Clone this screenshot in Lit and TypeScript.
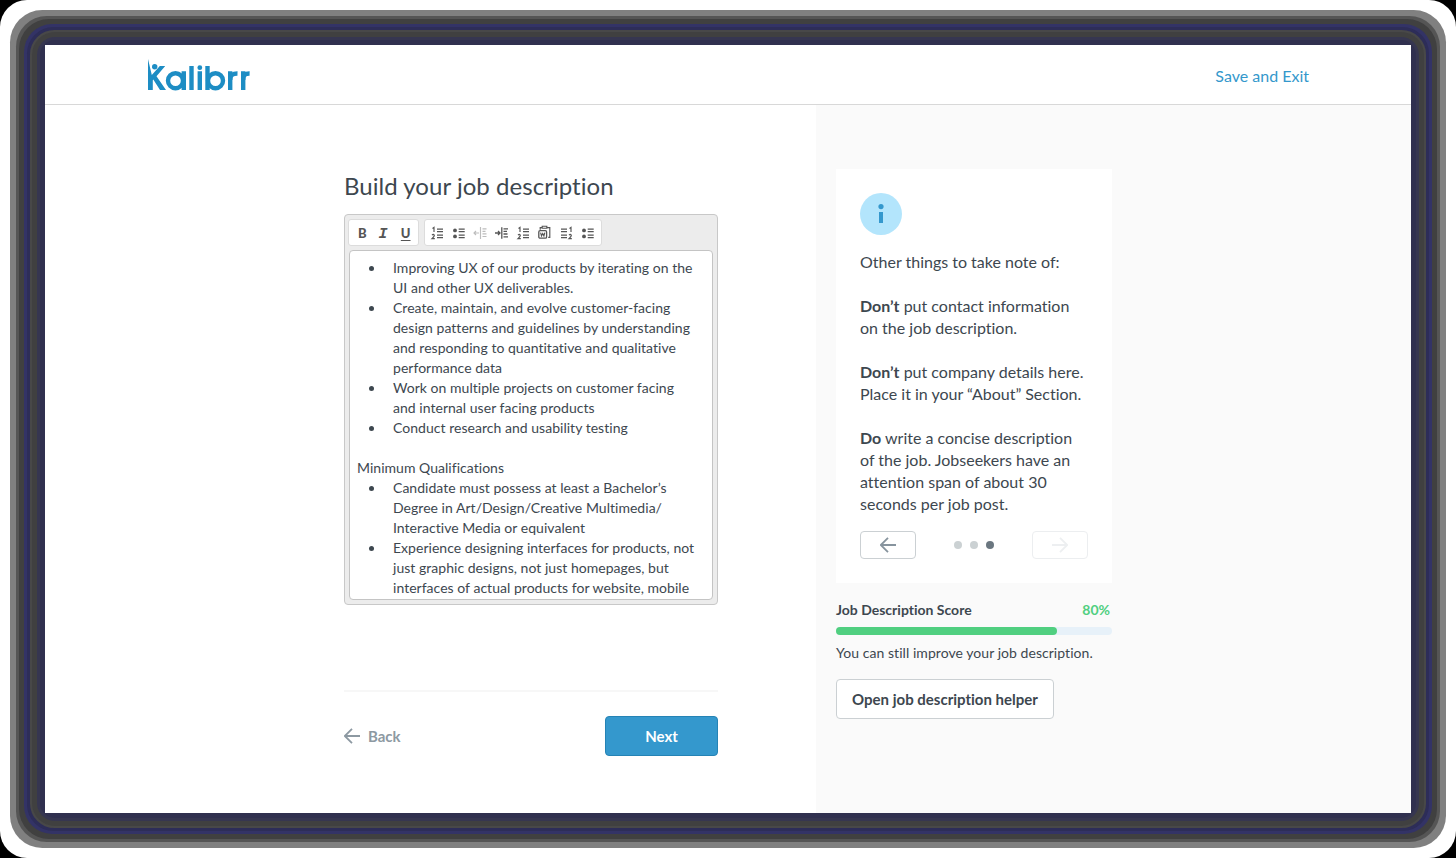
import { LitElement, html, css, svg } from "lit";
import { customElement, property } from "lit/decorators.js";

const one = (x: number, y: number) => svg`<path d="M${x} ${y + 1}L${x + 1.5} ${y}V${y + 4.5}" />`;
const two = (x: number, y: number) => svg`<path d="M${x - 0.5} ${y + 1}q1.4-1.6 2.3 0q.3 1-2.3 3.4h2.8" />`;
const rows = (x: number, w: number) => svg`<path stroke-width="1.2" d="M${x} 4.2h${w}M${x} 6.7h${w}M${x} 10.2h${w}M${x} 12.7h${w}" />`;

const icons: Record<string, unknown> = {
  ordered: svg`${one(2.5, 2.4)}${two(2.5, 9.2)}${rows(7, 6)}`,
  bullets: svg`<circle cx="4" cy="5.4" r="1.9" fill="currentColor" stroke="none" /><circle cx="4" cy="11.4" r="1.9" fill="currentColor" stroke="none" />${rows(7.7, 6)}`,
  outdent: svg`<path d="M1 8h5M3 6L1 8l2 2M7.5 2v12" /><path d="M9.5 3.8h4M9.5 6.3h3M9.5 8.8h4M9.5 11.5h4" />`,
  indent: svg`<path stroke-width="1.3" d="M1 8h5M4 6l2 2l-2 2M7.8 2.3v11.4M9.5 3.8h4.5M9.5 6.3h3.5M9.5 9h4M9.5 11.8h4.5" />`,
  paste: svg`<path d="M3.2 4.8V2.6H5.2M9.8 2.6h3v9.7h-1.6M5.2 1.2h4.6v2H5.2z" /><rect x="1.8" y="5.6" width="7.8" height="7.6" rx="1.3" stroke-width="1.3" /><path d="M3.6 7.6l.9 3.4L5.7 8.6l1.2 2.4L7.8 7.6" />`,
  reversed: svg`${rows(2, 6)}${one(10.5, 2.4)}${two(10.5, 9.2)}`,
};

const duties = [
  ["Improving UX of our products by iterating on the", "UI and other UX deliverables."],
  ["Create, maintain, and evolve customer-facing", "design patterns and guidelines by understanding", "and responding to quantitative and qualitative", "performance data"],
  ["Work on multiple projects on customer facing", "and internal user facing products"],
  ["Conduct research and usability testing"],
];
const qualifications = [
  ["Candidate must possess at least a Bachelor’s", "Degree in Art/Design/Creative Multimedia/", "Interactive Media or equivalent"],
  ["Experience designing interfaces for products, not", "just graphic designs, not just homepages, but", "interfaces of actual products for website, mobile"],
];

const arrow = (flip = false) => html`<svg width="16" height="16" viewBox="0 0 16 16" fill="none" stroke="currentColor" stroke-width="1.8">
  ${flip ? svg`<path d="M0 8h15M8 .8L15.2 8L8 15.2" />` : svg`<path d="M16 8H1M8 .8L.8 8L8 15.2" />`}</svg>`;

@customElement("job-editor")
class JobEditor extends LitElement {
  static styles = css`
    :host { display: block; }
    .editor { box-sizing: border-box; height: 391px; display: flex; flex-direction: column; gap: 4px; background: #ececec; border: 1px solid #c8c8c8; border-radius: 4px; padding: 4px; }
    .toolbar { display: flex; gap: 5px; height: 27px; flex: none; margin-left: -1px; }
    .group { box-sizing: border-box; display: flex; align-items: center; background: #fff; border: 1px solid #dcdcdc; border-radius: 3px; height: 27px; color: #555; }
    .text { width: 71px; padding: 0 2px 0 3px; }
    .lists { width: 178px; padding: 0 2px; }
    .tool { display: flex; flex: 1; align-items: center; justify-content: center; height: 25px; font: 900 13px Lato, sans-serif; }
    .faded { color: #bdbdbd; }
    .italic { font: italic 700 15px/17px "Liberation Mono", monospace; padding: 3px 2px 0 0; height: 22px; }
    .underline { text-decoration: underline; text-underline-offset: 2px; text-decoration-thickness: 1px; }
    .content { flex: 1; min-height: 0; overflow: hidden; box-sizing: border-box; background: #fff; border: 1px solid #c4c4c4; border-radius: 4px; padding: 7px; font-size: 14px; line-height: 20px; letter-spacing: 0.03px; white-space: nowrap; }
    .list { margin: 0 0 20px; padding: 0 0 0 36px; list-style: none; }
    .item { display: block; }
    .item::before { content: ""; float: left; width: 5px; height: 5px; border-radius: 50%; background: #3d474f; margin: 8px 0 0 -24px; }
    .line { display: block; }
  `;
  private list(items: string[][]) {
    return html`<ul class="list">${items.map((lines) => html`<li class="item">${lines.map((l) => html`<span class="line">${l}</span>`)}</li>`)}</ul>`;
  }
  render() {
    const tools = ["ordered", "bullets", "outdent", "indent", "ordered", "paste", "reversed", "bullets"];
    return html`<div class="editor">
      <div class="toolbar">
        <div class="group text"><span class="tool">B</span><span class="tool italic">I</span><span class="tool underline">U</span></div>
        <div class="group lists">${tools.map((t) => html`<span class="tool ${t === "outdent" ? "faded" : ""}"><svg width="16" height="16" viewBox="0 0 16 16" fill="none" stroke="currentColor" stroke-width="1.15">${icons[t]}</svg></span>`)}</div>
      </div>
      <div class="content">${this.list(duties)}<div>Minimum Qualifications</div>${this.list(qualifications)}</div>
    </div>`;
  }
}

@customElement("score-meter")
class ScoreMeter extends LitElement {
  @property({ type: Number }) score = 0;
  static styles = css`
    :host { display: block; }
    .head { display: flex; justify-content: space-between; font-weight: 700; font-size: 14px; line-height: 20px; padding-right: 2px; }
    .value { color: #50cf80; }
    .track { height: 8px; border-radius: 4px; background: #e7f1f9; margin: 7px 0 8px; }
    .fill { height: 8px; border-radius: 4px; background: #50cf80; }
    .hint { font-size: 14px; line-height: 20px; letter-spacing: 0.05px; white-space: nowrap; }
  `;
  render() {
    return html`<div class="head"><span class="name">Job Description Score</span><span class="value">${this.score}%</span></div>
      <div class="track"><div class="fill" style="width:${this.score}%"></div></div>
      <div class="hint">You can still improve your job description.</div>`;
  }
}

@customElement("app-root")
class AppRoot extends LitElement {
  static styles = css`
    :host { display: block; height: 858px; background: #000; font-family: Lato, sans-serif; font-variant-ligatures: none; color: #3d474f; }
    .sheet { box-sizing: border-box; height: 858px; padding: 45px; background: #fff; border-radius: 27px; overflow: hidden; }
    .frame { height: 768px; border-radius: 10px; background: #333350;
      box-shadow: 0 0 0 5px #30304f, 0 0 0 8px #363650, 0 0 0 13px #404040, 0 0 0 15px #484848, 0 0 0 18px #2d2d58, 0 0 0 21px #333366, 0 0 0 26px #404040, 0 0 0 29px #555, 0 0 0 35px #808080; }
    .page { height: 768px; background: #fff; display: flex; flex-direction: column; }
    .header { box-sizing: border-box; height: 60px; flex: none; border-bottom: 1px solid #d8d8d8; display: flex; justify-content: space-between; align-items: center; padding: 1px 102px 0 102px; }
    .exit { color: #3498cc; font-size: 16px; }
    .main { flex: 1; display: flex; }
    .left { box-sizing: border-box; width: 771px; padding: 66px 98px 0 299px; }
    .title { margin: 0 0 13px; font-size: 24px; line-height: 30px; font-weight: 400; letter-spacing: 0.04px; white-space: nowrap; }
    .footer { margin-top: 85px; border-top: 2px solid #f7f7f7; padding-top: 24px; display: flex; justify-content: space-between; align-items: center; }
    .back { display: flex; align-items: center; gap: 8px; color: #8d99a2; font-size: 15px; font-weight: 700; }
    .next { box-sizing: border-box; width: 113px; height: 40px; border: 1px solid #2583b5; border-radius: 4px; background: #3498cd; color: #fff; font: 700 15px Lato, sans-serif; padding: 0; }
    .right { box-sizing: border-box; flex: 1; background: #fafafa; padding: 64px 299px 0 20px; }
    .card { box-sizing: border-box; height: 414px; background: #fff; padding: 24px; font-size: 16px; line-height: 22px; white-space: nowrap; }
    .info { display: block; margin-bottom: 16px; }
    .note { margin: 0 0 22px; }
    .pager { display: flex; justify-content: space-between; align-items: center; margin-top: -6px; }
    .turn { box-sizing: border-box; width: 56px; height: 28px; border: 1px solid #cbd0d3; border-radius: 4px; color: #87949e; display: flex; align-items: center; justify-content: center; }
    .off { border-color: #eceef0; color: #edeff1; }
    .dots { display: flex; gap: 8px; }
    .dot { width: 8px; height: 8px; border-radius: 50%; background: #cbd1d3; }
    .on { background: #6b7780; }
    .score { margin: 17px 0 16px; }
    .helper { box-sizing: border-box; width: 218px; height: 40px; border: 1px solid #cbd0d3; border-radius: 4px; background: #fff; color: #3d474f; font: 700 15px Lato, sans-serif; font-variant-ligatures: none; padding: 0; white-space: nowrap; }
  `;
  render() {
    return html`<div class="sheet"><div class="frame"><div class="page">
      <header class="header">
        <svg width="104" height="34" viewBox="0 0 104 34" fill="none" stroke="#1d8dc4" stroke-width="4.4">
          <path fill="#1d8dc4" stroke="none" d="M1 1L4.8 17L12.8 8H18.2L9.5 18.2L19 32H13L6.3 21.6L5.8 22.2V32H1z" />
          <circle cx="7.7" cy="8.7" r="2.7" fill="#1d8dc4" stroke="none" />
          <circle cx="28.5" cy="22.7" r="7.5" /><path d="M36.8 13.3V32M44.5 8V32M52.8 13.3V32M60.5 8V32M83.2 13.3V32M96.2 13.3V32" />
          <circle cx="68.5" cy="22.7" r="7.5" />
          <path d="M83.2 22C83.2 17 86 15.4 90.5 15.5M96.2 22C96.2 17 98 15.4 102.6 15.5" />
          <circle cx="52.8" cy="9.7" r="2.4" fill="#1d8dc4" stroke="none" />
        </svg>
        <span class="exit">Save and Exit</span>
      </header>
      <main class="main">
        <section class="left">
          <h1 class="title">Build your job description</h1>
          <job-editor></job-editor>
          <div class="footer"><span class="back">${arrow()}Back</span><button class="next">Next</button></div>
        </section>
        <aside class="right">
          <div class="card">
            <svg class="info" width="42" height="42" viewBox="0 0 42 42"><circle cx="21" cy="21" r="21" fill="#b3e5fc" /><g fill="#3498cd"><circle cx="21" cy="13.6" r="2.6" /><path d="M19 19h4v11h-4z" /></g></svg>
            <p class="note">Other things to take note of:</p>
            <p class="note"><b>Don’t</b> put contact information<br />on the job description.</p>
            <p class="note"><b>Don’t</b> put company details here.<br />Place it in your “About” Section.</p>
            <p class="note"><b>Do</b> write a concise description<br />of the job. Jobseekers have an<br />attention span of about 30<br />seconds per job post.</p>
            <div class="pager"><span class="turn">${arrow()}</span><span class="dots"><i class="dot"></i><i class="dot"></i><i class="dot on"></i></span><span class="turn off">${arrow(true)}</span></div>
          </div>
          <score-meter class="score" .score=${80}></score-meter>
          <button class="helper">Open job description helper</button>
        </aside>
      </main>
    </div></div></div>`;
  }
}
